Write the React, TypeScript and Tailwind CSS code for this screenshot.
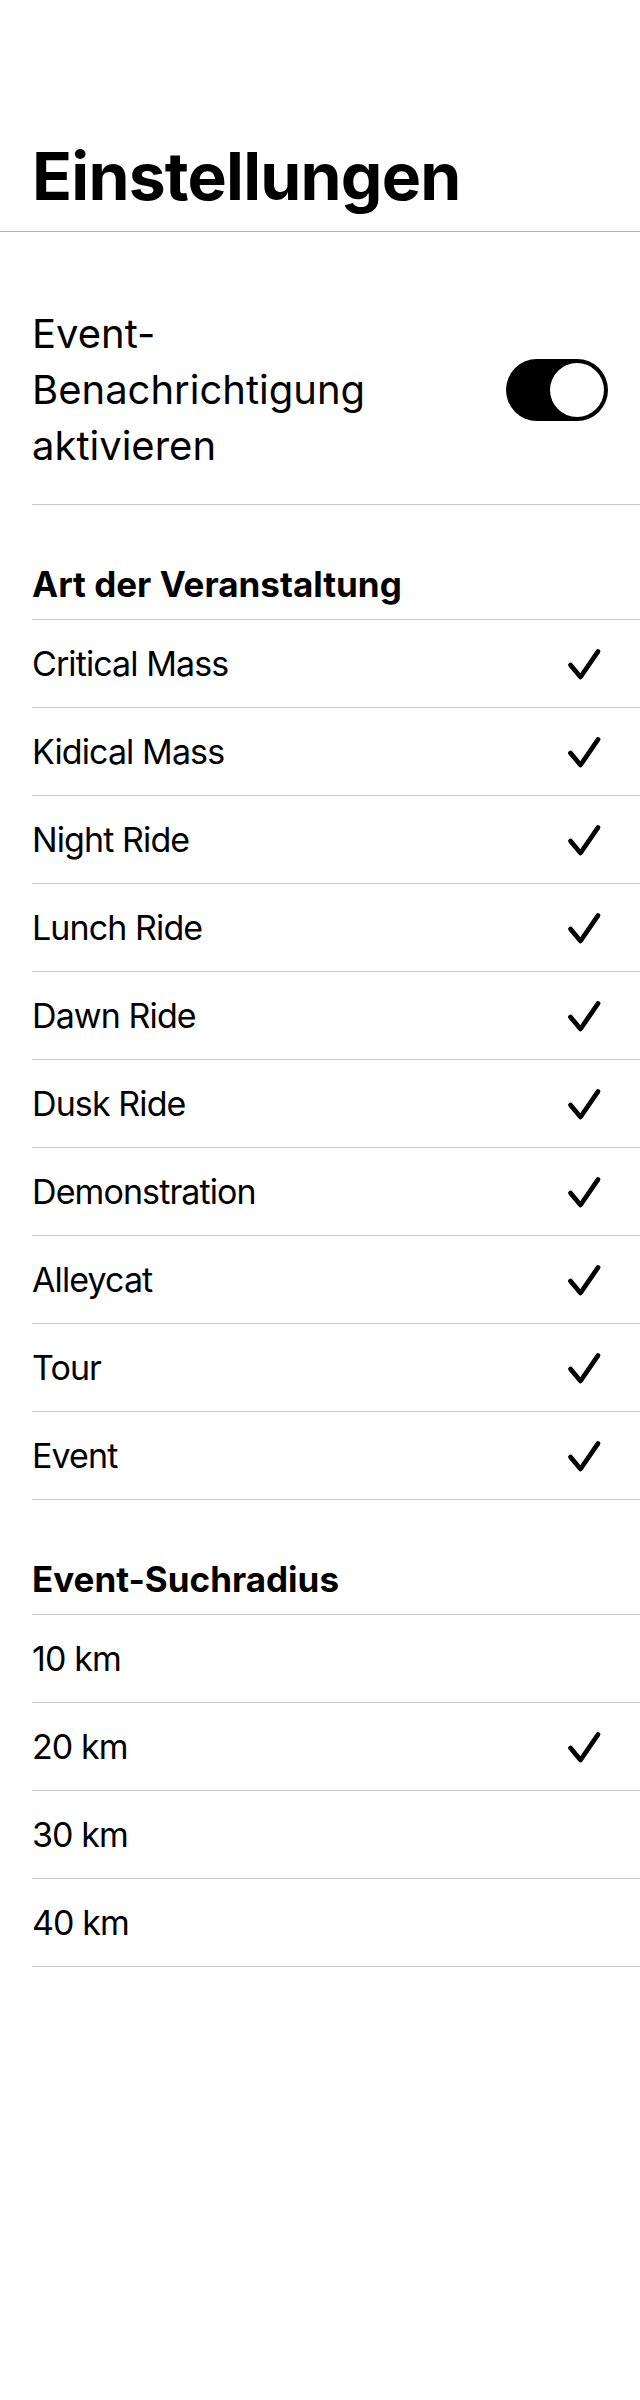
import { useState } from "react";

const eventTypes = [
  "Critical Mass",
  "Kidical Mass",
  "Night Ride",
  "Lunch Ride",
  "Dawn Ride",
  "Dusk Ride",
  "Demonstration",
  "Alleycat",
  "Tour",
  "Event",
];

const radii = [10, 20, 30, 40];

function Check() {
  return (
    <svg width="32" height="30" viewBox="0 0 32 30" fill="none" className="overflow-visible">
      <path
        d="M2.5 16 L12.5 28 L30 2.5"
        stroke="black"
        strokeWidth="4.8"
        strokeLinecap="round"
        strokeLinejoin="round"
      />
    </svg>
  );
}

function Toggle({ on, onChange }: { on: boolean; onChange: () => void }) {
  return (
    <button
      onClick={onChange}
      className={`flex h-[62px] w-[102px] shrink-0 items-center rounded-full p-[4px] ${
        on ? "justify-end bg-black" : "justify-start bg-[#e9e9ea]"
      }`}
    >
      <span className="block h-[54px] w-[54px] rounded-full bg-white" />
    </button>
  );
}

function SectionHeader({ title }: { title: string }) {
  return (
    <div className="border-b border-[#c8c7cc] pt-[59px] pb-[14px] text-[35px] font-bold leading-[41px]">
      {title}
    </div>
  );
}

function Row({ label, checked, onClick }: { label: string; checked: boolean; onClick: () => void }) {
  return (
    <div
      onClick={onClick}
      className="flex h-[88px] cursor-pointer items-center justify-between border-b border-[#c8c7cc] pr-[40px]"
    >
      <span className="text-[34px] leading-[41px] tracking-[-0.9px]">{label}</span>
      {checked && <Check />}
    </div>
  );
}

export default function App() {
  const [enabled, setEnabled] = useState(true);
  const [types, setTypes] = useState<string[]>(eventTypes);
  const [radius, setRadius] = useState(20);

  const toggleType = (t: string) =>
    setTypes((prev) => (prev.includes(t) ? prev.filter((x) => x !== t) : [...prev, t]));

  return (
    <div className="min-h-[2400px] bg-white font-['Inter',sans-serif] text-black">
      <header className="border-b border-[#b2b2b2] px-8 pt-[136px] pb-[15px]">
        <h1 className="text-[66px] font-bold leading-[80px] tracking-[-0.8px]">Einstellungen</h1>
      </header>

      <div className="mt-[44px] pl-8">
        <div className="flex items-center justify-between border-b border-[#c8c7cc] py-[30px] pr-8">
          <span className="text-[40px] leading-[56px]">
            Event-
            <br />
            Benachrichtigung
            <br />
            aktivieren
          </span>
          <Toggle on={enabled} onChange={() => setEnabled(!enabled)} />
        </div>

        <SectionHeader title="Art der Veranstaltung" />
        {eventTypes.map((t) => (
          <Row key={t} label={t} checked={types.includes(t)} onClick={() => toggleType(t)} />
        ))}

        <SectionHeader title="Event-Suchradius" />
        {radii.map((r) => (
          <Row key={r} label={`${r} km`} checked={radius === r} onClick={() => setRadius(r)} />
        ))}
      </div>
    </div>
  );
}
